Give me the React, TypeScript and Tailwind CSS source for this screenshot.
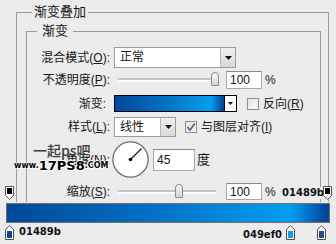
import type { ReactNode } from "react";

const grad =
  "bg-[linear-gradient(to_right,#01489b_0%,#0370c2_45%,#049ef0_88%,#01489b_99%)]";

function Key({ children }: { children: ReactNode }) {
  return <span className="underline underline-offset-[1px]">{children}</span>;
}

function Label({ children }: { children: ReactNode }) {
  return (
    <div className="w-[83px] shrink-0 text-right text-[12px] leading-[14px] text-[#161616]">
      {children}
    </div>
  );
}

function Arrow() {
  return (
    <svg width="7" height="4" viewBox="0 0 7 4">
      <path d="M0 0H7L3.5 4Z" fill="#111" />
    </svg>
  );
}

function Select({ value, wide }: { value: string; wide?: boolean }) {
  return (
    <div
      className={
        (wide ? "w-[122px]" : "w-[62px]") +
        " ml-1 flex h-full border border-[#9c9c9c] bg-white"
      }
    >
      <div className="flex-1 pl-[5px] text-[12px] leading-[19px]">{value}</div>
      <div className="flex w-[15px] items-center justify-center border-l border-[#b5b5b5] bg-[linear-gradient(#f0f0f0,#d9d9d9)]">
        <Arrow />
      </div>
    </div>
  );
}

function Slider({ thumb }: { thumb: number }) {
  return (
    <div className="relative ml-[8px] h-full w-[98px]">
      <div className="absolute left-0 right-0 top-1/2 h-[3px] -translate-y-1/2 border-t border-[#8c8c8c] bg-white" />
      <div
        className="absolute top-[1px] h-[14px] w-[8px] rounded-t-[4px] border border-[#8a8a8a] bg-[linear-gradient(#fafafa,#d4d4d4)]"
        style={{ left: thumb }}
      />
    </div>
  );
}

function Field({ value, w }: { value: string; w: "short" | "angle" }) {
  return (
    <div
      className={
        (w === "short" ? "ml-[10px] w-[36px]" : "ml-[4px] w-[42px]") +
        " flex h-full items-center border border-[#a8a8a8] border-t-[#8a8a8a] bg-white pl-[3px] text-[12px] leading-[16px]"
      }
    >
      {value}
    </div>
  );
}

function Check({ on }: { on?: boolean }) {
  return (
    <div className="flex h-[12px] w-[12px] items-center justify-center border border-[#8d8d8d] bg-[linear-gradient(135deg,#e2e2e2,#ffffff)]">
      {on && (
        <svg width="10" height="10" viewBox="0 0 10 10">
          <path d="M1.5 5 L4 8 L8.8 1.5" stroke="#5d5d96" strokeWidth="1.7" fill="none" />
        </svg>
      )}
    </div>
  );
}

function TopStop({ x }: { x: number }) {
  return (
    <svg className="absolute top-[2px]" style={{ left: x }} width="9" height="14" viewBox="0 0 9 14">
      <path d="M0.5 0.5H8.5V9.5L4.5 13.3L0.5 9.5Z" fill="#fff" stroke="#505050" />
      <rect x="2" y="2" width="5" height="6" fill="#000" />
    </svg>
  );
}

function BottomStop({ x, color }: { x: number; color: string }) {
  return (
    <svg className="absolute top-[2px]" style={{ left: x }} width="9" height="15" viewBox="0 0 9 15">
      <path d="M4.5 0.7L8.5 4.5V14.5H0.5V4.5Z" fill="#fff" stroke="#505050" />
      <rect x="2" y="6" width="5" height="7" fill={color} />
    </svg>
  );
}

function GroupTitle({ title, lead }: { title: string; lead: "outer" | "inner" }) {
  return (
    <div className="flex h-[16px] w-full">
      <div
        className={
          (lead === "outer" ? "w-[16px] min-w-[16px]" : "w-[11px] min-w-[11px]") +
          " h-[8px] shrink-0 self-end border-l border-t border-[#9a9a9a]"
        }
      />
      <div className={(lead === "outer" ? "px-[2px]" : "px-[5px]") + " shrink-0 text-[13px] leading-4"}>
        {title}
      </div>
      <div className="h-[8px] flex-1 self-end border-r border-t border-[#9a9a9a]" />
    </div>
  );
}

export default function App() {
  return (
    <div className="relative h-[244px] w-[336px] overflow-hidden bg-[#ececec] pl-[16px] pt-[4px] font-['Liberation_Sans','Noto_Sans_CJK_SC',sans-serif] text-[#161616]">
      {/* outer group: 渐变叠加 */}
      <div className="w-[313px]">
        <GroupTitle title="渐变叠加" lead="outer" />
        <div className="border-x border-b border-[#9a9a9a] pb-[20px] pl-[9px] pr-[7px] pt-[3px]">
          {/* inner group: 渐变 */}
          <GroupTitle title="渐变" lead="inner" />
          <div className="border-x border-b border-[#9a9a9a] pb-[30px] pt-[8px]">
            <div className="flex h-[21px] items-center">
              <Label>
                混合模式(<Key>O</Key>):
              </Label>
              <Select value="正常" wide />
            </div>

            <div className="mt-[3px] flex h-[18px] items-center">
              <Label>
                不透明度(<Key>P</Key>):
              </Label>
              <Slider thumb={93} />
              <Field value="100" w="short" />
              <span className="ml-[3px] text-[12px]">%</span>
            </div>

            <div className="mt-[6px] flex h-[17px] items-center">
              <Label>
                <span className="pr-[4px]">渐变:</span>
              </Label>
              <div className="ml-1 flex h-full w-[123px] border border-black">
                <div className={"flex-1 " + grad} />
                <div className="flex w-[12px] items-center justify-center border-l border-black bg-white">
                  <svg width="5" height="3" viewBox="0 0 5 3">
                    <path d="M0 0H5L2.5 3Z" fill="#111" />
                  </svg>
                </div>
              </div>
              <div className="ml-[10px]">
                <Check />
              </div>
              <span className="ml-[4px] text-[12px] leading-[14px]">
                反向(<Key>R</Key>)
              </span>
            </div>

            <div className="mt-[5px] flex h-[20px] items-center">
              <Label>
                样式(<Key>L</Key>):
              </Label>
              <Select value="线性" />
              <div className="ml-[9px]">
                <Check on />
              </div>
              <span className="ml-[4px] text-[12px] leading-[14px]">
                与图层对齐(<Key>I</Key>)
              </span>
            </div>

            <div className="mt-[4px] flex h-[37px] items-center">
              <Label>
                角度(<Key>N</Key>):
              </Label>
              <svg className="ml-[2px]" width="37" height="37" viewBox="0 0 37 37">
                <circle cx="18.5" cy="18.5" r="17.6" fill="#fff" stroke="#707070" strokeWidth="1.3" />
                <line x1="18.5" y1="18.5" x2="29.5" y2="7.5" stroke="#111" strokeWidth="1.1" />
                <circle cx="18.5" cy="18.5" r="1.8" fill="#000" />
              </svg>
              <div className="h-[22px]">
                <Field value="45" w="angle" />
              </div>
              <span className="ml-[2px] text-[13px]">度</span>
            </div>

            <div className="mt-[5px] flex h-[17px] items-center">
              <Label>
                缩放(<Key>S</Key>):
              </Label>
              <Slider thumb={57} />
              <Field value="100" w="short" />
              <span className="ml-[3px] text-[12px]">%</span>
            </div>
          </div>
        </div>
      </div>

      {/* watermark */}
      <div className="absolute left-[14px] top-[142px] leading-none">
        <div className="ml-[19px] font-['Noto_Sans_CJK_SC',sans-serif] text-[14px] font-medium leading-[16px] text-[#3c3c3c]">
          一起ps吧
        </div>
        <div className="mt-[2px] flex items-end font-['DejaVu_Sans',sans-serif] font-bold text-black [text-shadow:1px_1px_0_#fff,-1px_0_0_#fff,0_-1px_0_#fff]">
          <span className="text-[8px] leading-[10px]">www.</span>
          <span className="text-[13px] leading-[11px]">17PS8</span>
          <span className="text-[8px] leading-[10px]">.COM</span>
        </div>
      </div>

      {/* gradient editor strip */}
      <div className="absolute left-0 top-[184px] h-[60px] w-full font-['DejaVu_Sans',sans-serif]">
        <div className="relative h-[18px]">
          <TopStop x={5} />
          <span className="absolute right-[12px] top-[3px] bg-[#ececec] pl-[2px] text-[10px] font-bold leading-[12px] text-[#111]">
            01489b
          </span>
          <TopStop x={323} />
        </div>
        <div className="bg-[#ececec] pt-[1px]">
          <div className={"mx-[6px] h-[20px] border border-[#6f6f6f] " + grad} />
          <div className="relative h-[21px]">
            <BottomStop x={5} color="#0b4b9a" />
            <span className="absolute left-[19px] top-[3px] text-[10px] font-bold leading-[12px] text-[#111]">
              01489b
            </span>
            <span className="absolute left-[243px] top-[6px] text-[10px] font-bold leading-[12px] text-[#111]">
              049ef0
            </span>
            <BottomStop x={286} color="#169be6" />
            <BottomStop x={317} color="#1f4f96" />
          </div>
        </div>
      </div>
    </div>
  );
}
